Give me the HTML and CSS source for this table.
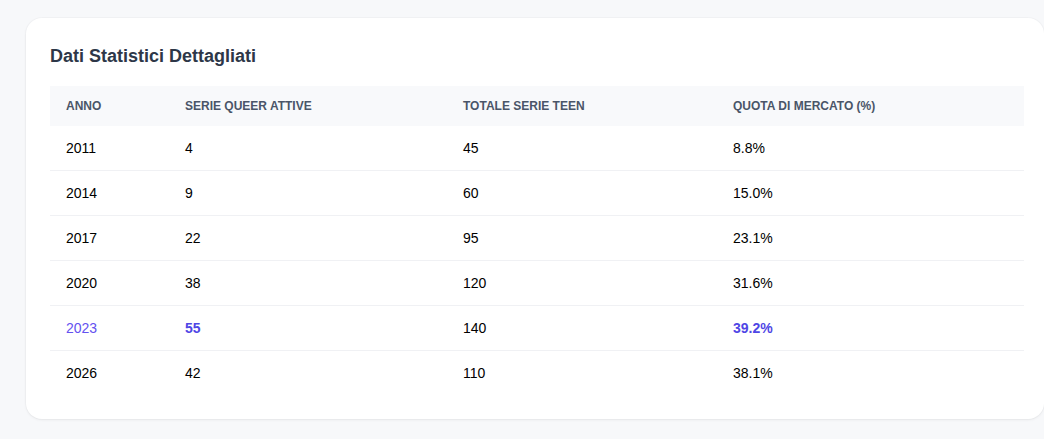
FILE: index.html
```html
<!DOCTYPE html>
<html lang="it">
<head>
<meta charset="utf-8">
<title>Dati Statistici Dettagliati</title>
<link rel="stylesheet" href="styles.css">
</head>
<body>
<section class="card">
  <h2 class="card-title">Dati Statistici Dettagliati</h2>
  <table class="stats">
    <colgroup>
      <col class="c1"><col class="c2"><col class="c3"><col class="c4">
    </colgroup>
    <thead>
      <tr><th>Anno</th><th>Serie Queer Attive</th><th>Totale Serie Teen</th><th>Quota di Mercato (%)</th></tr>
    </thead>
    <tbody>
      <tr><td>2011</td><td>4</td><td>45</td><td>8.8%</td></tr>
      <tr><td>2014</td><td>9</td><td>60</td><td>15.0%</td></tr>
      <tr><td>2017</td><td>22</td><td>95</td><td>23.1%</td></tr>
      <tr><td>2020</td><td>38</td><td>120</td><td>31.6%</td></tr>
      <tr class="peak"><td class="peak-year">2023</td><td class="peak-val">55</td><td>140</td><td class="peak-val">39.2%</td></tr>
      <tr><td>2026</td><td>42</td><td>110</td><td>38.1%</td></tr>
    </tbody>
  </table>
</section>
</body>
</html>
```
FILE: styles.css
```css
html, body {
  margin: 0;
  background: #f7f8fa;
  font-family: "Liberation Sans", Arial, sans-serif;
  overflow: hidden;
}
body {
  padding: 18px 0 0 26px;
  width: 1044px;
  height: 439px;
  box-sizing: border-box;
}
.card {
  width: 1018px;
  box-sizing: border-box;
  background: #ffffff;
  border-radius: 16px;
  box-shadow: 0 1px 3px rgba(0, 0, 0, 0.06), 0 0 0 1px rgba(0, 0, 0, 0.02);
  padding: 24px 20px 24px 24px;
}
.card-title {
  margin: 0 0 16px;
  font-size: 18px;
  line-height: 28px;
  font-weight: 700;
  color: #2d3748;
}
.stats {
  width: 100%;
  border-collapse: collapse;
  table-layout: fixed;
}
.c1 { width: 119px; }
.c2 { width: 278px; }
.c3 { width: 270px; }
.c4 { width: auto; }
.stats th {
  background: #f8f9fb;
  text-align: left;
  text-transform: uppercase;
  font-size: 12px;
  font-weight: 700;
  color: #4a5568;
  height: 40px;
  padding: 0 16px;
}
.stats td {
  font-size: 14px;
  line-height: 20px;
  color: #000000;
  padding: 12px 16px;
  border-bottom: 1px solid #f0f1f4;
}
.stats tbody tr:last-child td {
  border-bottom: none;
}
.stats td.peak-year {
  color: #6451f0;
}
.stats td.peak-val {
  color: #4f46e5;
  font-weight: 700;
}
```
